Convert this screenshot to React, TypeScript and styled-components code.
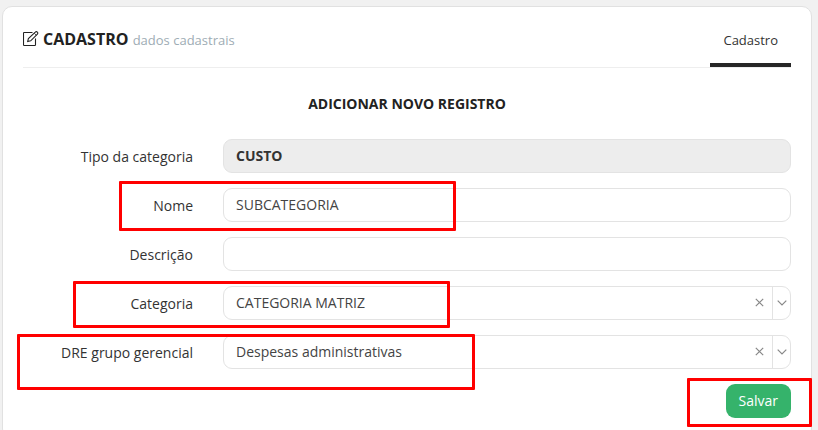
import { useState } from "react";
import styled, { createGlobalStyle, css } from "styled-components";

const GlobalStyle = createGlobalStyle`
  *, *::before, *::after { box-sizing: border-box; }
  html { overflow: hidden; }
  body {
    margin: 0;
    background: #f1f1f1;
    color: #333;
    font-family: "Open Sans", sans-serif;
    font-size: 14px;
    line-height: 20px;
  }
  button, input, select { font: inherit; }
`;

const Page = styled.main`
  padding: 6px 6px 8px 2px;
`;

const Portlet = styled.section`
  padding: 12px 20px 20px;
  background: #fff;
  border: 1px solid #e1e1e1;
  border-radius: 10px;
`;

const Header = styled.header`
  display: flex;
  align-items: stretch;
  justify-content: space-between;
  height: 49px;
  border-bottom: 1px solid #eee;
`;

const Caption = styled.div`
  display: flex;
  align-items: center;
  gap: 4px;
  padding-bottom: 8px;
  color: #222;
`;

const Title = styled.h1`
  margin: 0;
  font-size: 16px;
  font-weight: 700;
  line-height: 20px;

  small {
    color: #9eacb4;
    font-size: 13px;
    font-weight: 400;
  }
`;

const Tab = styled.a`
  padding: 11px 13px 0;
  border-bottom: 4px solid #262626;
  color: #333;
  font-size: 13px;
  text-decoration: none;
`;

const FormTitle = styled.h2`
  margin: 26px 0 25px;
  color: #222;
  font-size: 14px;
  font-weight: 700;
  line-height: 20px;
  text-align: center;
`;

const Form = styled.form`
  display: flex;
  flex-direction: column;
  gap: 15px;
`;

const Row = styled.div`
  position: relative;
  display: grid;
  grid-template-columns: 170px minmax(0, 1fr);
  column-gap: 30px;
`;

const Label = styled.label`
  padding-top: 8px;
  text-align: right;
`;

const fieldBox = css`
  width: 100%;
  height: 34px;
  background: #fff;
  border: 1px solid #e3e3e3;
  border-radius: 9px;
`;

const TextInput = styled.input`
  ${fieldBox}
  padding: 0 12px 2px;
  color: #444;
  outline: none;

  &:read-only {
    background: #ededed;
    color: #333;
    font-weight: 700;
  }
`;

const Combo = styled.div`
  ${fieldBox}
  display: grid;
  grid-template-columns: minmax(0, 1fr) 25px 18px;
  overflow: hidden;
  color: #888;
`;

const Select = styled.select`
  grid-area: 1 / 1 / 2 / 4;
  height: 32px;
  padding: 0 48px 0 12px;
  appearance: none;
  background: transparent;
  border: 0;
  color: #444;
  outline: none;
`;

const ClearButton = styled.button`
  grid-area: 1 / 2 / 2 / 3;
  display: grid;
  place-items: center;
  padding: 0 0 2px;
  background: none;
  border: 0;
  color: inherit;
`;

const Arrow = styled.span`
  grid-area: 1 / 3 / 2 / 4;
  display: grid;
  place-items: center;
  border-left: 1px solid #e3e3e3;
  pointer-events: none;
`;

const Actions = styled.div`
  position: relative;
  display: flex;
  justify-content: flex-end;
`;

const SaveButton = styled.button`
  height: 34px;
  padding: 0 13px;
  background: #35b36b;
  border: 0;
  border-radius: 9px;
  color: #fff;
`;

const Highlight = styled.span<{
  $top: number;
  $left?: number;
  $right?: number;
  $width: number;
  $height: number;
}>`
  position: absolute;
  z-index: 1;
  top: ${(p) => p.$top}px;
  left: ${(p) => (p.$left === undefined ? "auto" : `${p.$left}px`)};
  right: ${(p) => (p.$right === undefined ? "auto" : `${p.$right}px`)};
  width: ${(p) => p.$width}px;
  height: ${(p) => p.$height}px;
  border: 3px solid #f00;
  border-radius: 1px;
  pointer-events: none;
`;

const EditIcon = () => (
  <svg width="16" height="16" viewBox="0 0 16 16" fill="none" stroke="currentColor" strokeWidth="1.1" aria-hidden="true">
    <path d="M9.5 1.5H1.2a.7.7 0 0 0-.7.7v11.6c0 .4.3.7.7.7h10.6c.4 0 .7-.3.7-.7V7.5" />
    <path d="M12.3 1.1a1.4 1.4 0 0 1 2.1 0 1.4 1.4 0 0 1 0 2L7.7 9.8l-3 .7.7-3z" />
    <path d="M11.2 2.2l2.1 2" strokeWidth=".8" />
  </svg>
);

function ComboField({ id, option }: { id: string; option: string }) {
  const [value, setValue] = useState(option);
  return (
    <Combo>
      <Select id={id} value={value} onChange={(e) => setValue(e.target.value)}>
        <option value="" />
        <option value={option}>{option}</option>
      </Select>
      <ClearButton type="button" aria-label="Limpar" onClick={() => setValue("")}>
        <svg width="9" height="9" viewBox="0 0 9 9" fill="none" stroke="currentColor" strokeWidth="1.2" aria-hidden="true">
          <path d="M.8.8l7.4 7.4M8.2.8L.8 8.2" />
        </svg>
      </ClearButton>
      <Arrow>
        <svg width="10" height="6" viewBox="0 0 10 6" fill="none" stroke="currentColor" strokeWidth="1.2" aria-hidden="true">
          <path d="M.7.7L5 5 9.3.7" />
        </svg>
      </Arrow>
    </Combo>
  );
}

export default function App() {
  return (
    <>
      <GlobalStyle />
      <Page>
        <Portlet>
          <Header>
            <Caption>
              <EditIcon />
              <Title>
                CADASTRO <small>dados cadastrais</small>
              </Title>
            </Caption>
            <Tab href="#cadastro">Cadastro</Tab>
          </Header>
          <FormTitle>ADICIONAR NOVO REGISTRO</FormTitle>
          <Form id="cadastro" onSubmit={(e) => e.preventDefault()}>
            <Row>
              <Label htmlFor="tipo">Tipo da categoria</Label>
              <TextInput id="tipo" readOnly value="CUSTO" />
            </Row>
            <Row>
              <Label htmlFor="nome">Nome</Label>
              <TextInput id="nome" defaultValue="SUBCATEGORIA" />
              <Highlight $top={-7} $left={96} $width={337} $height={50} />
            </Row>
            <Row>
              <Label htmlFor="descricao">Descrição</Label>
              <TextInput id="descricao" />
            </Row>
            <Row>
              <Label htmlFor="categoria">Categoria</Label>
              <ComboField id="categoria" option="CATEGORIA MATRIZ" />
              <Highlight $top={-5} $left={50} $width={377} $height={47} />
            </Row>
            <Row>
              <Label htmlFor="dre">DRE grupo gerencial</Label>
              <ComboField id="dre" option="Despesas administrativas" />
              <Highlight $top={-1} $left={-6} $width={458} $height={56} />
            </Row>
            <Actions>
              <SaveButton type="submit">Salvar</SaveButton>
              <Highlight $top={-6} $right={-21} $width={125} $height={49} />
            </Actions>
          </Form>
        </Portlet>
      </Page>
    </>
  );
}
